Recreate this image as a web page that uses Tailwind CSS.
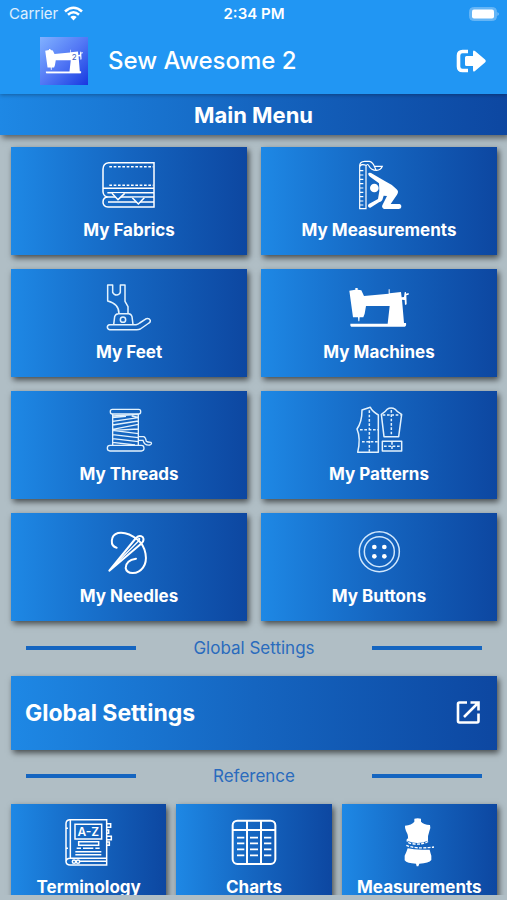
<!DOCTYPE html>
<html lang="en">
<head>
<meta charset="utf-8">
<meta name="viewport" content="width=device-width, initial-scale=1">
<title>Sew Awesome 2</title>
<script src="https://cdn.jsdelivr.net/npm/@tailwindcss/browser@4"></script>
</head>
<body class="flex h-screen flex-col overflow-hidden bg-[#b0bec5] font-['Inter','Liberation_Sans',sans-serif] text-white">

<svg class="hidden" aria-hidden="true">
  <symbol id="machine" viewBox="291 75 180 120">
    <path fill="currentColor" d="M292 86L310 83V78H317V83L328 85L336 102L410 95V82H413V94L447 90L449 106L456 105L458 91L462 90V95L470 93V98L463 100L464 127L459 129L458 114L450 113L456 183H462Q464 193 458 194H298Q294 193 295 185H407L413 132H342L338 155L334 166H323L322 178H319L318 166H303Z"/>
  </symbol>
</svg>

<header class="relative z-20 bg-[#2196f3] shadow-[0_1px_4px_rgba(0,0,0,0.3)]">
  <div class="grid h-[27px] grid-cols-3 items-center pr-2 pl-[9px] text-sm">
    <span class="flex items-center gap-1.5 text-[15px] text-white/85">Carrier
      <svg class="h-[15px] w-[19px] text-white" viewBox="0 0 19 15" fill="none" stroke="currentColor" stroke-width="2.6"><path d="M1 5.5Q9.500 -2 18 5.500M4 8.700Q9.500 3.800 15 8.700"/><path d="M6.300 11Q9.500 8.500 12.700 11L9.500 14.500Z" fill="currentColor" stroke="none"/></svg>
    </span>
    <span class="text-center text-[15px] font-semibold">2:34 PM</span>
    <svg class="h-[14px] w-[30px] justify-self-end" viewBox="0 0 30 14"><rect x=".5" y=".5" width="27" height="13" rx="4" fill="#64b5f6" stroke="#64b5f6"/><rect x="3" y="2.500" width="22" height="9" rx="2" fill="#fff"/><path d="M28.500 5Q31 7 28.500 9Z" fill="#90caf9"/></svg>
  </div>
  <div class="flex h-[67px] items-center pr-[21px] pl-10">
    <div class="flex size-12 items-center justify-center bg-linear-to-br from-[#82b1ff] via-[#5378f5] to-[#1a35e0]">
      <svg class="h-[26px] w-[38px]" viewBox="291 75 180 120"><use href="#machine" x="291" y="75" width="180" height="120"/><text x="418" y="128" font-size="38" fill="#3f5fc0">2</text></svg>
    </div>
    <h1 class="ml-5 flex-1 text-2xl font-medium">Sew Awesome 2</h1>
    <button type="button" aria-label="Sign out">
      <svg class="h-6 w-[30px]" viewBox="0 0 30 24"><path d="M12 2.500H6.500Q2.500 2.500 2.500 6.500V17.500Q2.500 21.500 6.500 21.500H12" fill="none" stroke="#fff" stroke-width="3.600"/><path fill="#fff" d="M9 8.500Q9 7 10.500 7H17V3Q17 .5 19 2L29 10.500Q30.500 12 29 13.500L19 22Q17 23.500 17 21V17H10.500Q9 17 9 15.500Z"/></svg>
    </button>
  </div>
</header>

<h2 class="relative z-10 bg-linear-to-r from-[#1e88e5] via-[#1565c0] to-[#0d47a1] pt-[7px] pb-[5px] text-center text-[22px] leading-[29px] font-bold shadow-[2px_3px_6px_rgba(0,0,0,0.5)]">Main Menu</h2>

<main class="mb-[5px] min-h-0 flex-1 overflow-y-auto pt-3 pr-[10px] pl-[11px] [scrollbar-width:none]">
  <nav aria-label="Main menu" class="grid grid-cols-2 gap-[14px]">
    <a href="#fabrics" class="flex flex-col items-center gap-[7px] bg-linear-to-r from-[#1e88e5] via-[#1565c0] to-[#0d47a1] pt-3 pb-[13px] text-[17px] leading-6 font-bold shadow-[2px_3px_6px_rgba(0,0,0,0.6)]">
      <svg class="h-[52px] w-[60px]" viewBox="297 57 180 156" fill="none" stroke="#fff" stroke-width="4.500"><path d="M462 68H326Q309 70 309 88V156Q311 171 325 171H462M462 66V201H324Q309 200 309 186Q309 171 325 171M310 145H462M322 158H462M324 186H462"/><path stroke-dasharray="8 5" d="M328 80H460M328 136H460"/><path d="M336 160L354 179L374 160M397 173L415 192L433 173" fill="#1668c5"/></svg>
      My Fabrics
    </a>
    <a href="#measurements" class="flex flex-col items-center gap-[7px] bg-linear-to-r from-[#1e88e5] via-[#1565c0] to-[#0d47a1] pt-3 pb-[13px] text-[17px] leading-6 font-bold shadow-[2px_3px_6px_rgba(0,0,0,0.6)]">
      <svg class="h-[52px] w-[60px]" viewBox="291 57 180 156" fill="none" stroke="#fff" stroke-width="3.500"><path d="M323 206V76Q324 65 338 64H352Q362 66 367 79H391Q386 91 374 91Q357 91 351 78Q347 69 342 78V206ZM323 80Q327 70 342 76M367 79L372 90"/><path d="M324 92H334M324 105H334M324 118H334M324 131H334M324 144H334M324 157H334M324 170H334M324 183H334M324 195H334"/><circle cx="367" cy="144" r="13" fill="#fff" stroke="none"/><path fill="#fff" stroke="none" d="M349 99Q355 96 361 101L397 122Q419 132 433 147Q442 154 435 164L416 192H443Q449 194 448 201Q447 207 440 207H396Q388 203 391 196L405 168L395 167L391 180Q388 185 381 187L355 203Q347 204 348 196Q349 192 356 189L378 177L382 153L381 130L354 110Q347 105 349 99Z"/></svg>
      My Measurements
    </a>
    <a href="#feet" class="flex flex-col items-center gap-[7px] bg-linear-to-r from-[#1e88e5] via-[#1565c0] to-[#0d47a1] pt-3 pb-[13px] text-[17px] leading-6 font-bold shadow-[2px_3px_6px_rgba(0,0,0,0.6)]">
      <svg class="h-[52px] w-[60px]" viewBox="297 57 180 156" fill="none" stroke="#e3f2fd" stroke-width="4.500" stroke-linejoin="round"><path d="M323 69H338V91Q342 99 350 99Q358 99 361 91V69H375V118L384 134V155H357Q357 125 323 117ZM341 188L344 164Q346 156 355 155H386Q394 156 396 164L399 188M329 188H408Q414 187 419 183L439 170Q447 168 451 175Q452 180 447 183L421 201Q417 203 410 203H329Q322 202 322 195Q322 189 329 188Z"/><circle cx="369" cy="173" r="8"/></svg>
      My Feet
    </a>
    <a href="#machines" class="flex flex-col items-center gap-[7px] bg-linear-to-r from-[#1e88e5] via-[#1565c0] to-[#0d47a1] pt-3 pb-[13px] text-[17px] leading-6 font-bold shadow-[2px_3px_6px_rgba(0,0,0,0.6)]">
      <svg class="h-[52px] w-[60px]" viewBox="291 57 180 156"><use href="#machine" x="291" y="75" width="180" height="120"/></svg>
      My Machines
    </a>
    <a href="#threads" class="flex flex-col items-center gap-[7px] bg-linear-to-r from-[#1e88e5] via-[#1565c0] to-[#0d47a1] pt-3 pb-[13px] text-[17px] leading-6 font-bold shadow-[2px_3px_6px_rgba(0,0,0,0.6)]">
      <svg class="h-[52px] w-[60px]" viewBox="297 54 180 156" fill="none" stroke="#e3f2fd" stroke-width="4"><rect x="331" y="73" width="91" height="14" rx="6"/><rect x="322" y="181" width="110" height="17" rx="8"/><path d="M338 87V181M415 87V181M338 93L415 88M338 98L378 94M395 93L415 97M338 109L415 98M338 120L415 108M338 133L415 118M338 136L415 132M338 136L415 146M338 149L415 158M338 161L415 170M338 172L405 180M415 155H431Q437 157 439 169Q442 172 453 172Q457 177 450 180Q433 182 429 166H415"/></svg>
      My Threads
    </a>
    <a href="#patterns" class="flex flex-col items-center gap-[7px] bg-linear-to-r from-[#1e88e5] via-[#1565c0] to-[#0d47a1] pt-3 pb-[13px] text-[17px] leading-6 font-bold shadow-[2px_3px_6px_rgba(0,0,0,0.6)]">
      <svg class="h-[52px] w-[60px]" viewBox="291 54 180 156" fill="none" stroke="#e3f2fd" stroke-width="4.500" stroke-linejoin="round"><path d="M330 75L355 67Q361 79 379 90V202H317Q327 160 315 132Q330 111 330 75ZM388 88Q400 81 405 73Q417 65 430 73Q435 81 449 88L440 155H396ZM391 169H449V198H391Z"/><path stroke-dasharray="8 5" d="M352 76V200M324 134H378M330 170H378M418 75V150M392 90H446M396 184H446M420 171V197"/></svg>
      My Patterns
    </a>
    <a href="#needles" class="flex flex-col items-center gap-[7px] bg-linear-to-r from-[#1e88e5] via-[#1565c0] to-[#0d47a1] pt-3 pb-[13px] text-[17px] leading-6 font-bold shadow-[2px_3px_6px_rgba(0,0,0,0.6)]">
      <svg class="h-[52px] w-[60px]" viewBox="297 54 180 156" fill="none" stroke="#fff" stroke-width="6" stroke-linecap="round" stroke-linejoin="round"><path d="M328 191L408 93Q418 83 428 90Q434 98 426 108ZM350 122C329 117 331 84 354 78Q382 73 414 99C438 119 445 160 429 182C412 205 380 202 377 183Q377 160 408 155"/><path stroke-width="4" d="M344 174L415 103Q422 94 416 94"/></svg>
      My Needles
    </a>
    <a href="#buttons" class="flex flex-col items-center gap-[7px] bg-linear-to-r from-[#1e88e5] via-[#1565c0] to-[#0d47a1] pt-3 pb-[13px] text-[17px] leading-6 font-bold shadow-[2px_3px_6px_rgba(0,0,0,0.6)]">
      <svg class="h-[52px] w-[60px]" viewBox="291 54 180 156" fill="none" stroke="#cfe6fc" stroke-width="4.500"><circle cx="382" cy="134" r="60"/><circle cx="382" cy="134" r="45"/><g fill="#fff" stroke="none"><circle cx="367" cy="120" r="7"/><circle cx="397" cy="120" r="7"/><circle cx="367" cy="148" r="7"/><circle cx="397" cy="148" r="7"/></g></svg>
      My Buttons
    </a>
  </nav>

  <div class="grid grid-cols-[110px_1fr_110px] items-center px-[15px] pt-[15px] pb-4">
    <span class="h-1 bg-[#1565c0]"></span>
    <h3 class="text-center text-[17px] leading-6 text-[#2a6bbd]">Global Settings</h3>
    <span class="h-1 bg-[#1565c0]"></span>
  </div>

  <a href="#settings" class="flex h-[74px] items-center justify-between bg-linear-to-r from-[#1e88e5] via-[#1565c0] to-[#0d47a1] pr-4 pl-[14px] text-[23px] font-bold shadow-[2px_3px_6px_rgba(0,0,0,0.6)]">
    Global Settings
    <svg class="size-[26px]" viewBox="0 0 26 26" fill="none" stroke="#fff" stroke-width="2.600"><path d="M12 2.500H4.500Q3 2.500 3 4V21Q3 22.500 4.500 22.500H22Q23.500 22.500 23.500 21V13.500M15.500 2.500H23.500V10.500M23.500 2.500L9 17"/></svg>
  </a>

  <div class="grid grid-cols-[110px_1fr_110px] items-center px-[15px] pt-[14px] pb-4">
    <span class="h-1 bg-[#1565c0]"></span>
    <h3 class="text-center text-[17px] leading-6 text-[#2a6bbd]">Reference</h3>
    <span class="h-1 bg-[#1565c0]"></span>
  </div>

  <nav aria-label="Reference" class="grid grid-cols-3 gap-[10px]">
    <a href="#terminology" class="flex flex-col items-center gap-[7px] bg-linear-to-r from-[#1e88e5] via-[#1565c0] to-[#0d47a1] pt-3 pb-[13px] text-[17px] leading-6 font-bold shadow-[2px_3px_6px_rgba(0,0,0,0.6)]">
      <svg class="h-[52px] w-[60px]" viewBox="177 63 180 156" fill="none" stroke="#fff" stroke-width="4.500"><path d="M320 74H208Q198 76 198 86V200Q199 210 210 210H320V72M211 75V190M320 190H210Q199 190 198 200M225 88H305V132H225ZM236 140H296V151H236ZM230 160H243M249 160H280M286 160H299M226 170H304M226 179H304M198 100H204M198 160H204M320 86H332V97H320M320 105H326V115H320M320 124H334V134H320M320 141H328V151H320M240 199H320"/><circle cx="222" cy="200" r="5"/><circle cx="234" cy="200" r="5"/><text x="265" y="123" text-anchor="middle" font-size="36" font-weight="600" fill="#fff" stroke="none">A-Z</text></svg>
      Terminology
    </a>
    <a href="#charts" class="flex flex-col items-center gap-[7px] bg-linear-to-r from-[#1e88e5] via-[#1565c0] to-[#0d47a1] pt-3 pb-[13px] text-[17px] leading-6 font-bold shadow-[2px_3px_6px_rgba(0,0,0,0.6)]">
      <svg class="h-[52px] w-[60px]" viewBox="672 63 180 156" fill="none" stroke="#fff" stroke-width="6"><rect x="698" y="77" width="128" height="130" rx="14"/><path d="M698 105H826M741 77V207M783 77V207"/><path stroke-width="5" d="M711 128H733M711 145H733M711 163H733M711 181H733M750 128H774M750 145H774M750 163H774M750 181H774M792 128H814M792 145H814M792 163H814M792 181H814"/></svg>
      Charts
    </a>
    <a href="#body-measurements" class="flex flex-col items-center gap-[7px] bg-linear-to-r from-[#1e88e5] via-[#1565c0] to-[#0d47a1] pt-3 pb-[13px] text-[17px] leading-6 font-bold shadow-[2px_3px_6px_rgba(0,0,0,0.6)]">
      <svg class="h-[52px] w-[60px]" viewBox="411 63 180 156"><path fill="#fff" d="M487 71Q497 68 507 71V80Q514 89 534 90Q537 98 532 109Q527 121 528 137Q497 151 467 138Q471 123 462 108Q458 98 459 92Q479 90 487 80ZM467 160Q484 164 510 164H533Q535 173 538 182V195Q531 205 502 206L499 214H494L492 206Q465 206 458 196V182Q463 173 467 160Z"/><path fill="none" stroke="#fff" stroke-width="4" stroke-dasharray="9 4" d="M467 131Q461 144 480 146Q510 151 531 138M463 151Q490 163 546 156"/></svg>
      Measurements
    </a>
  </nav>
</main>
</body>
</html>
